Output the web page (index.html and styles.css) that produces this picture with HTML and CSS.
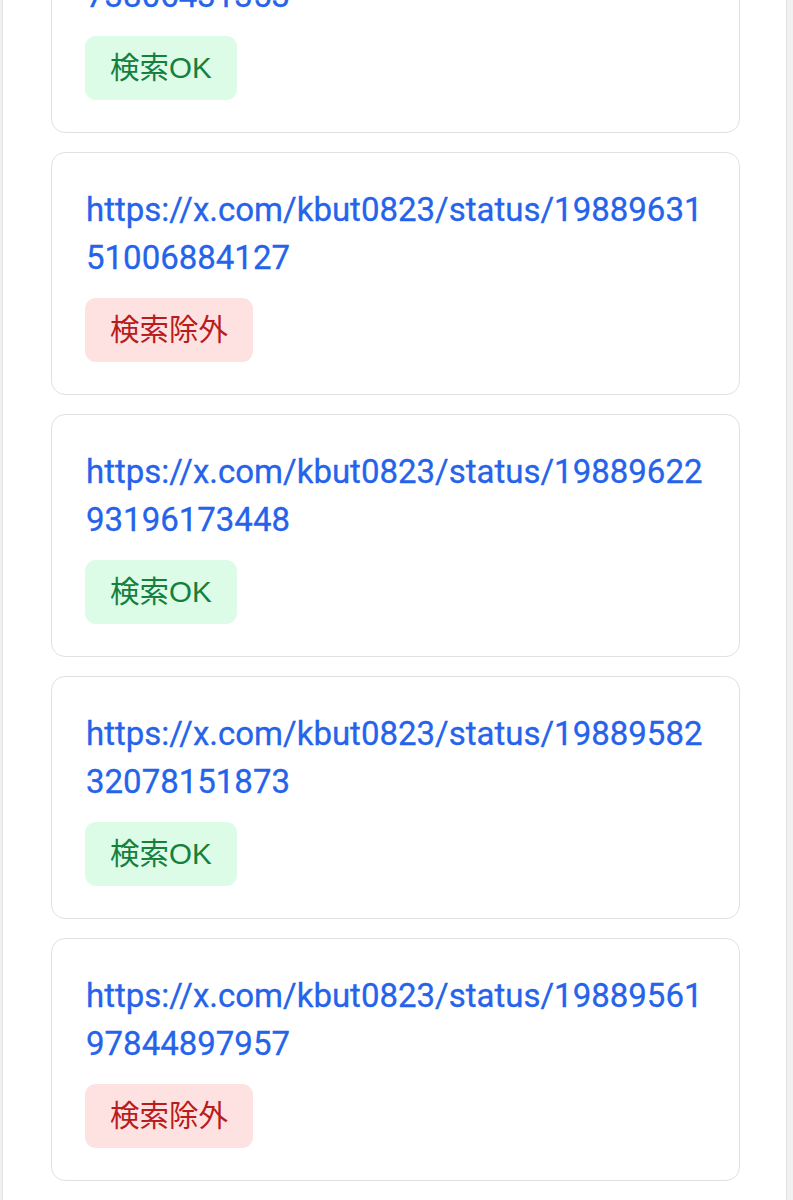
FILE: index.html
```html
<!DOCTYPE html>
<html lang="ja">
<head>
<meta charset="utf-8">
<title>検索結果</title>
<link rel="stylesheet" href="styles.css">
</head>
<body>
<div class="page">
  <div class="list">
    <div class="card">
      <a class="link" href="#">https://x.com/kbut0823/status/1988964873806431353</a>
      <div><span class="badge ok">検索OK</span></div>
    </div>
    <div class="card">
      <a class="link" href="#">https://x.com/kbut0823/status/1988963151006884127</a>
      <div><span class="badge ng">検索除外</span></div>
    </div>
    <div class="card">
      <a class="link" href="#">https://x.com/kbut0823/status/1988962293196173448</a>
      <div><span class="badge ok">検索OK</span></div>
    </div>
    <div class="card">
      <a class="link" href="#">https://x.com/kbut0823/status/1988958232078151873</a>
      <div><span class="badge ok">検索OK</span></div>
    </div>
    <div class="card">
      <a class="link" href="#">https://x.com/kbut0823/status/1988956197844897957</a>
      <div><span class="badge ng">検索除外</span></div>
    </div>
  </div>
</div>
</body>
</html>
```
FILE: styles.css
```css
html, body {
  margin: 0;
  padding: 0;
}
body {
  background: #f1f1f1;
  font-family: Roboto, "Liberation Sans", "Noto Sans CJK JP", sans-serif;
  overflow: hidden;
}
.page {
  margin: 0 6px 0 2px;
  background: #ffffff;
  border-left: 1px solid #e2e2e2;
  border-right: 1px solid #e2e2e2;
  min-height: 1200px;
  padding: 0 46px 60px 48px;
}
.list {
  margin-top: -110px;
  display: flex;
  flex-direction: column;
  gap: 19px;
}
.card {
  border: 1px solid #e1e1e1;
  border-radius: 14px;
  background: #fff;
  padding: 33px 26px 32px 34px;
  display: flex;
  flex-direction: column;
  gap: 16px;
}
.link {
  display: block;
  color: #2563eb;
  text-decoration: none;
  font-size: 33px;
  line-height: 48px;
  word-break: break-all;
  -webkit-text-stroke: 0.3px #2563eb;
}
.badge {
  display: inline-block;
  font-family: "Liberation Sans", "Noto Sans CJK JP", sans-serif;
  font-size: 29.5px;
  line-height: 40px;
  padding: 12px 25px;
  margin-left: -1px;
  border-radius: 11px;
}
.badge.ok {
  background: #dcfce7;
  color: #15803d;
}
.badge.ng {
  background: #fee2e2;
  color: #b91c1c;
}
```
